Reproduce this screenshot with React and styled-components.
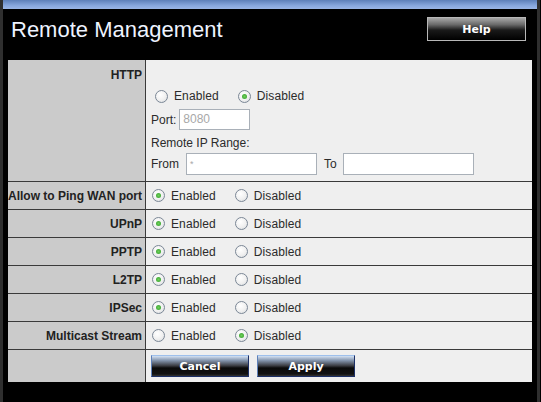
import React from "react";
import styled, { createGlobalStyle } from "styled-components";

const Global = createGlobalStyle`
  html, body { margin: 0; padding: 0; background: #000; }
  body { font-family: "Liberation Sans", Arial, sans-serif; }
  * { box-sizing: border-box; }
`;

const Page = styled.div`
  width: 541px;
  height: 402px;
  display: flex;
  background: #000;
  overflow: hidden;
`;

const Rail = styled.div`
  width: 3px;
  background: #2f2f2f;
  flex: none;
`;

const Gap = styled.div`
  width: ${(p) => p.$w}px;
  background: #000;
  flex: none;
`;

const Main = styled.div`
  width: 534px;
  flex: none;
  display: flex;
  flex-direction: column;
`;

const TopBar = styled.div`
  height: 9px;
  background: linear-gradient(to bottom, #5d7fb8 0%, #86a6dc 60%, #9ab6e6 100%);
`;

const Header = styled.div`
  height: 51px;
  display: flex;
  justify-content: space-between;
  align-items: flex-start;
  padding: 8px 11px 0 8px;
`;

const Title = styled.h1`
  margin: 0;
  font-family: "Liberation Sans", Arial, sans-serif;
  font-weight: normal;
  font-size: 22px;
  line-height: 26px;
  color: #eef3ff;
`;

const HelpButton = styled.button`
  margin-top: 0;
  width: 99px;
  height: 24px;
  border: 1px solid #b8b8b8;
  background: linear-gradient(to bottom, #a8a8a8 0%, #6a6a6a 30%, #1a1a1a 55%, #000 100%);
  color: #fff;
  font-family: "DejaVu Sans", Verdana, sans-serif;
  font-weight: bold;
  font-size: 11px;
  padding: 0;
`;

const Panel = styled.div`
  margin: 0 5px;
  width: 524px;
  display: grid;
  grid-template-columns: 137px 1px 1fr;
  background: #efefef;
`;

const Label = styled.div`
  background: #cbcbcb;
  text-align: right;
  padding: ${(p) => (p.$top ? "8px 3px 0 0" : "0 3px 0 0")};
  display: flex;
  align-items: ${(p) => (p.$top ? "flex-start" : "center")};
  justify-content: flex-end;
  font-weight: bold;
  font-size: 12px;
  line-height: 14px;
  color: #222;
  height: ${(p) => p.$h}px;
  border-bottom: ${(p) => (p.$last ? "none" : "1px solid #3a3a3a")};
`;

const VLine = styled.div`
  background: #3a3a3a;
  height: ${(p) => p.$h}px;
`;

const Cell = styled.div`
  height: ${(p) => p.$h}px;
  border-bottom: 1px solid #3a3a3a;
  display: flex;
  align-items: center;
  padding-left: 6px;
  font-size: 12px;
  color: #2b2b2b;
`;

const HttpCell = styled.div`
  height: 122px;
  border-bottom: 1px solid #3a3a3a;
  display: flex;
  flex-direction: column;
  padding: 26px 0 0 5px;
  font-size: 12px;
  color: #2b2b2b;
`;

const Line = styled.div`
  display: flex;
  align-items: center;
  height: ${(p) => p.$h}px;
  margin-top: ${(p) => p.$mt || 0}px;
`;

const Options = styled.div`
  display: flex;
  align-items: center;
  padding-left: ${(p) => p.$pl || 0}px;
`;

const Option = styled.label`
  display: flex;
  align-items: center;
  gap: 6px;
  margin-right: 19px;
  font-size: 12px;
  line-height: 14px;
  color: #2b2b2b;
  letter-spacing: 0.1px;
`;

const Radio = styled.span`
  width: 13px;
  height: 13px;
  border-radius: 50%;
  border: 1px solid #7b8796;
  background: radial-gradient(circle at 40% 35%, #ffffff 0%, #f0f0f0 55%, #d4d8dc 100%);
  display: flex;
  align-items: center;
  justify-content: center;
  flex: none;
  &::after {
    content: "";
    width: 5px;
    height: 5px;
    border-radius: 50%;
    background: ${(p) => (p.$on ? "radial-gradient(circle, #6fd05a 0%, #2e9a28 100%)" : "transparent")};
  }
`;

const Text = styled.span`
  font-size: 12px;
  line-height: 14px;
  color: #2b2b2b;
  margin-right: ${(p) => p.$mr || 0}px;
  margin-left: ${(p) => p.$ml || 0}px;
`;

const Field = styled.div`
  width: ${(p) => p.$w}px;
  height: ${(p) => p.$h}px;
  border: 1px solid #a9b0b8;
  background: #fff;
  color: #a8a8a8;
  font-size: ${(p) => (p.$small ? 9 : 12)}px;
  line-height: ${(p) => p.$h - 2}px;
  padding-left: 3px;
`;

const BtnCell = styled.div`
  height: 32px;
  display: flex;
  align-items: flex-start;
  gap: 8px;
  padding: 5px 0 0 5px;
`;

const ActionButton = styled.button`
  width: 98px;
  height: 22px;
  padding: 0;
  border: 1px solid #1c2f66;
  border-top-color: #9ec0ec;
  border-left-color: #5e80b8;
  background: linear-gradient(to bottom, #d4e2f4 0%, #8596ae 22%, #3c3e44 48%, #0a0a0a 60%, #121212 90%, #333 100%);
  color: #fff;
  font-family: "DejaVu Sans", Verdana, sans-serif;
  font-weight: bold;
  font-size: 11px;
`;

const Bottom = styled.div`
  flex: 1;
  background: #000;
`;

const RadioPair = ({ on, pl }) => (
  <Options $pl={pl}>
    <Option>
      <Radio $on={on === "en"} />
      Enabled
    </Option>
    <Option>
      <Radio $on={on === "dis"} />
      Disabled
    </Option>
  </Options>
);

const rows = [
  ["Allow to Ping WAN port", "en"],
  ["UPnP", "en"],
  ["PPTP", "en"],
  ["L2TP", "en"],
  ["IPSec", "en"],
  ["Multicast Stream", "dis"],
];

export default function App() {
  return (
    <>
      <Global />
      <Page>
        <Rail />
        <Main>
          <TopBar />
          <Header>
            <Title>Remote Management</Title>
            <HelpButton>Help</HelpButton>
          </Header>
          <Panel>
            <Label $top $h={122}>HTTP</Label>
            <VLine $h={122} />
            <HttpCell>
              <Line $h={20}>
                <RadioPair on="dis" pl={4} />
              </Line>
              <Line $h={21} $mt={3}>
                <Text $mr={3}>Port:</Text>
                <Field $w={71} $h={21}>8080</Field>
              </Line>
              <Line $h={18} $mt={4}>
                <Text>Remote IP Range:</Text>
              </Line>
              <Line $h={22} $mt={1}>
                <Text $mr={7}>From</Text>
                <Field $w={131} $h={22} $small>*</Field>
                <Text $ml={7} $mr={6}>To</Text>
                <Field $w={131} $h={22} />
              </Line>
            </HttpCell>
            {rows.map(([name, on]) => (
              <React.Fragment key={name}>
                <Label $h={28}>{name}</Label>
                <VLine $h={28} />
                <Cell $h={28}>
                  <RadioPair on={on} />
                </Cell>
              </React.Fragment>
            ))}
            <Label $h={32} $last />
            <VLine $h={32} />
            <BtnCell>
              <ActionButton>Cancel</ActionButton>
              <ActionButton>Apply</ActionButton>
            </BtnCell>
          </Panel>
          <Bottom />
        </Main>
        <Rail />
        <Gap $w={1} />
      </Page>
    </>
  );
}
